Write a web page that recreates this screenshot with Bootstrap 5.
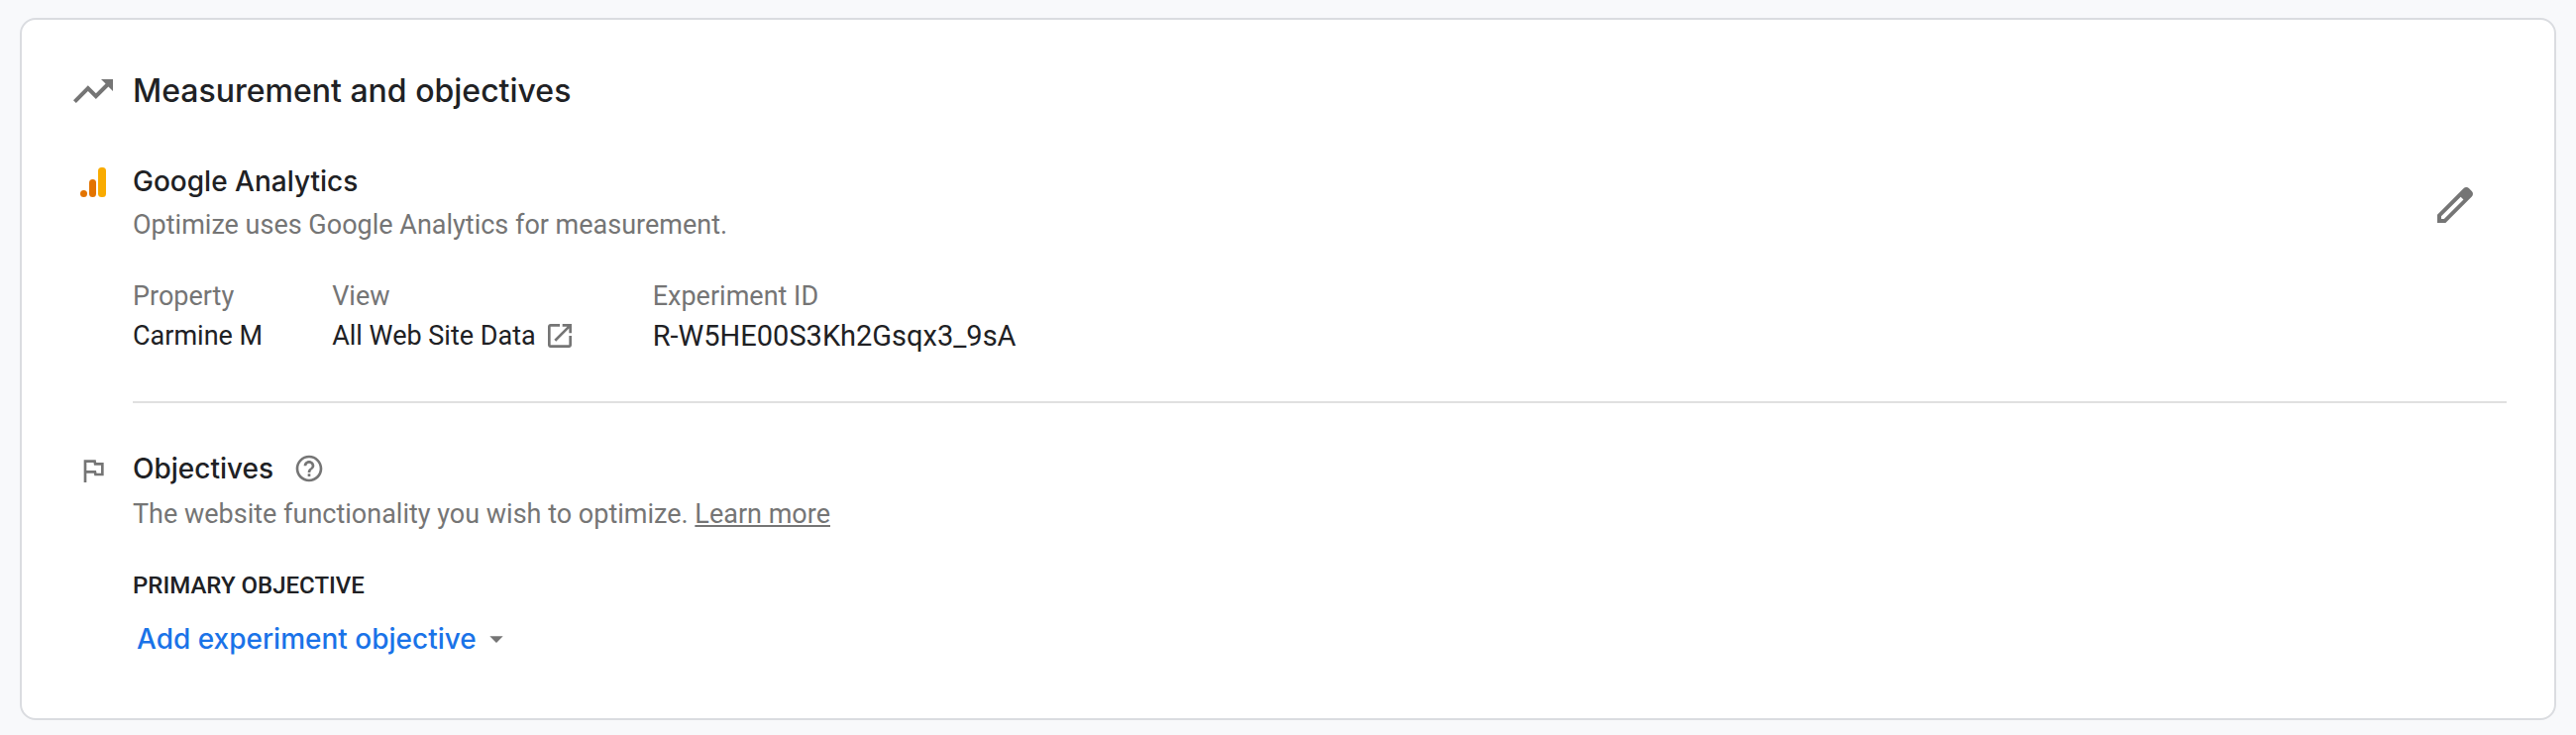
<!DOCTYPE html>
<html lang="en">
<head>
<meta charset="utf-8">
<meta name="viewport" content="width=device-width, initial-scale=1">
<title>Measurement and objectives</title>
<link href="https://cdn.jsdelivr.net/npm/bootstrap@5.3.0/dist/css/bootstrap.min.css" rel="stylesheet">
<style>
  body { background: #f8f9fb; color: #202124; font-family: Roboto, "Liberation Sans", sans-serif; font-size: 27px; line-height: 32px; }
  svg { display: block; flex: none; fill: #757575; }
  .page { padding: 18px 20px 12px; }
  .panel { border: 2px solid #dadce0; border-radius: 16px; padding: 48px 48px 62px; }
  .icon-col { width: 48px; margin-right: 16px; flex: none; }
  .title { font-family: Inter, Roboto, sans-serif; font-size: 32px; line-height: 40px; font-weight: 500; }
  .subtitle, .add-btn { font-family: Inter, Roboto, sans-serif; font-size: 28px; line-height: 36px; font-weight: 500; }
  .muted { color: #757575; }
  .section-top { padding-top: 49px; }
  .section-top p { margin: 10px 0 0; }
  .section-bottom { padding-top: 48px; }
  .section-bottom p { margin: 12px 0 0; }
  .fields { column-gap: 70px; margin-top: 40px; }
  .fields dt { font-weight: 400; margin-bottom: 4px; }
  .fields dd { line-height: 40px; }
  .exp-id { font-size: 29px; }
  .rule { border-top: 2px solid #e0e0e0; margin: 46px 0 0 64px; }
  .help-row { gap: 20px; }
  .caps { font-size: 24px; line-height: 32px; font-weight: 500; margin-top: 40px; }
  .add-btn { color: #1a73e8; margin-top: 20px; padding: 0 4px; }
  .add-btn:hover { color: #174ea6; }
  .edit-btn { padding: 12px; margin: 6px 16px 0 0; }
</style>
</head>
<body>
<main class="page">
  <section class="card panel">
    <header class="d-flex align-items-center">
      <span class="icon-col"><svg width="48" height="48" viewBox="0 0 24 24" aria-hidden="true"><path d="M16 6l2.290 2.290-4.880 4.880-4-4L2 16.590 3.410 18l6-6 4 4 6.300-6.290L22 12V6z"/></svg></span>
      <h1 class="title mb-0">Measurement and objectives</h1>
    </header>

    <section class="d-flex align-items-start section-top">
      <span class="icon-col d-flex justify-content-center pt-1">
        <svg width="28" height="32" viewBox="0 0 28 32" aria-hidden="true"><circle cx="4.500" cy="26.500" r="3.500" fill="#e37400"/><rect x="10" y="12" width="7" height="18" rx="3.500" fill="#e37400"/><rect x="19" y="0" width="8" height="30" rx="3.500" fill="#f9ab00"/></svg>
      </span>
      <div class="flex-grow-1">
        <h2 class="subtitle mb-0">Google Analytics</h2>
        <p class="muted">Optimize uses Google Analytics for measurement.</p>
        <dl class="d-flex fields mb-0">
          <div><dt class="muted">Property</dt><dd class="mb-0">Carmine M</dd></div>
          <div><dt class="muted">View</dt><dd class="mb-0 d-flex align-items-center gap-2 me-2">All Web Site Data
            <a href="#" aria-label="Open view"><svg width="32" height="32" viewBox="0 0 24 24" aria-hidden="true"><path d="M19 19H5V5h7V3H5c-1.110 0-2 .9-2 2v14c0 1.100.89 2 2 2h14c1.100 0 2-.9 2-2v-7h-2v7zM14 3v2h3.590l-9.830 9.830 1.410 1.410L19 6.410V10h2V3h-7z"/></svg></a></dd></div>
          <div><dt class="muted">Experiment ID</dt><dd class="mb-0 exp-id">R-W5HE00S3Kh2Gsqx3_9sA</dd></div>
        </dl>
      </div>
      <button type="button" class="btn border-0 edit-btn" aria-label="Edit measurement"><svg width="48" height="48" viewBox="0 0 24 24" aria-hidden="true"><path d="M20.410 4.940l-1.350-1.350c-.78-.78-2.050-.78-2.830 0L3 16.820V21h4.180L20.410 7.770c.79-.78.79-2.050 0-2.830zm-14 14.120L5 19v-1.360l9.820-9.820 1.410 1.410-9.820 9.830z"/></svg></button>
    </section>

    <div class="rule"></div>

    <section class="d-flex align-items-start section-bottom">
      <span class="icon-col d-flex justify-content-center pt-1"><svg width="32" height="32" viewBox="0 0 24 24" aria-hidden="true"><path d="M12.360 6l.4 2H18v6h-3.360l-.4-2H7V6h5.360M14 4H5v17h2v-7h5.600l.4 2h7V6h-5.600L14 4z"/></svg></span>
      <div>
        <div class="d-flex align-items-center help-row">
          <h2 class="subtitle mb-0">Objectives</h2>
          <a href="#" aria-label="Help about objectives"><svg width="32" height="32" viewBox="0 0 24 24" aria-hidden="true"><path d="M11 18h2v-2h-2v2zm1-16C6.480 2 2 6.480 2 12s4.480 10 10 10 10-4.480 10-10S17.520 2 12 2zm0 18c-4.410 0-8-3.590-8-8s3.590-8 8-8 8 3.590 8 8-3.590 8-8 8zm0-14c-2.210 0-4 1.790-4 4h2c0-1.100.9-2 2-2s2 .9 2 2c0 2-3 1.750-3 5h2c0-2.250 3-2.500 3-5 0-2.210-1.790-4-4-4z"/></svg></a>
        </div>
        <p class="muted">The website functionality you wish to optimize. <a href="#" class="muted">Learn more</a></p>
        <h3 class="caps mb-0">PRIMARY OBJECTIVE</h3>
        <button type="button" class="btn border-0 d-flex align-items-center gap-1 add-btn">Add experiment objective
          <svg width="32" height="32" viewBox="0 0 24 24" aria-hidden="true"><path d="M7 10l5 5 5-5z"/></svg></button>
      </div>
    </section>
  </section>
</main>
<script src="https://cdn.jsdelivr.net/npm/bootstrap@5.3.0/dist/js/bootstrap.bundle.min.js"></script>
</body>
</html>
